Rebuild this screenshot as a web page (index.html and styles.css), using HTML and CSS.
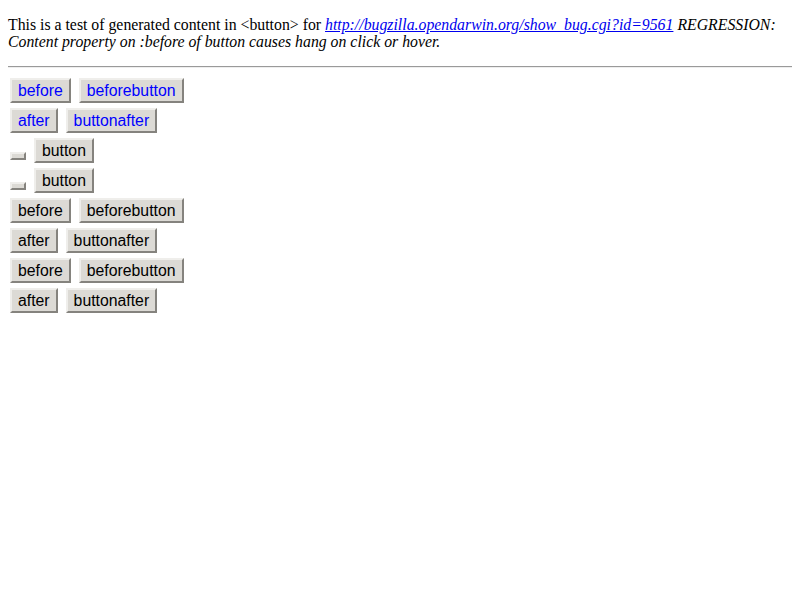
FILE: index.html
```html
<!DOCTYPE html>
<html>
<head>
<meta charset="utf-8">
<link rel="stylesheet" href="styles.css">
</head>
<body>
<div class="page">
<p class="intro">This is a test of generated content in &lt;button&gt; for <a href="#" class="bug">http://bugzilla.opendarwin.org/show_bug.cgi?id=9561</a> <i>REGRESSION: Content property on :before of button causes hang on click or hover.</i></p>
<hr class="rule">
<div class="rows">
<div class="row"><button class="btn blue">before</button><button class="btn blue">beforebutton</button></div>
<div class="row"><button class="btn blue">after</button><button class="btn blue">buttonafter</button></div>
<div class="row"><button class="btn empty"></button><button class="btn">button</button></div>
<div class="row"><button class="btn empty"></button><button class="btn">button</button></div>
<div class="row"><button class="btn">before</button><button class="btn">beforebutton</button></div>
<div class="row"><button class="btn">after</button><button class="btn">buttonafter</button></div>
<div class="row"><button class="btn">before</button><button class="btn">beforebutton</button></div>
<div class="row"><button class="btn">after</button><button class="btn">buttonafter</button></div>
</div>
</div>
</body>
</html>
```
FILE: styles.css
```css
html, body {
  margin: 0;
  padding: 0;
  background: #fff;
}
.page {
  padding: 16px 8px 8px 8px;
  font-family: "Liberation Serif", serif;
  font-size: 15.8px;
  color: #000;
}
.intro {
  margin: 0;
  line-height: 17px;
}
.bug {
  color: #0000ee;
  font-style: italic;
}
.rule {
  margin: 16px 0 0 0;
  border: 0;
  border-top: 1px solid #9a9a9a;
  border-bottom: 1px solid #eeeeee;
  height: 0;
}
.rows {
  padding-top: 10px;
  padding-left: 2px;
  display: flex;
  flex-direction: column;
  gap: 5px;
}
.row {
  height: 25px;
  display: flex;
  align-items: flex-start;
  gap: 8px;
}
.btn {
  margin: 0;
  box-sizing: border-box;
  height: 25px;
  padding: 0 6px;
  font-family: "Liberation Sans", Arial, sans-serif;
  font-size: 15.8px;
  line-height: 21px;
  color: #000;
  background: #dcdad5;
  border: 2px solid;
  border-color: #efeeeb #85837e #85837e #efeeeb;
  border-radius: 0;
}
.btn.blue {
  color: #0000ff;
}
.btn.empty {
  width: 16px;
  height: 8px;
  padding: 0;
  margin-top: 14px;
}
```
